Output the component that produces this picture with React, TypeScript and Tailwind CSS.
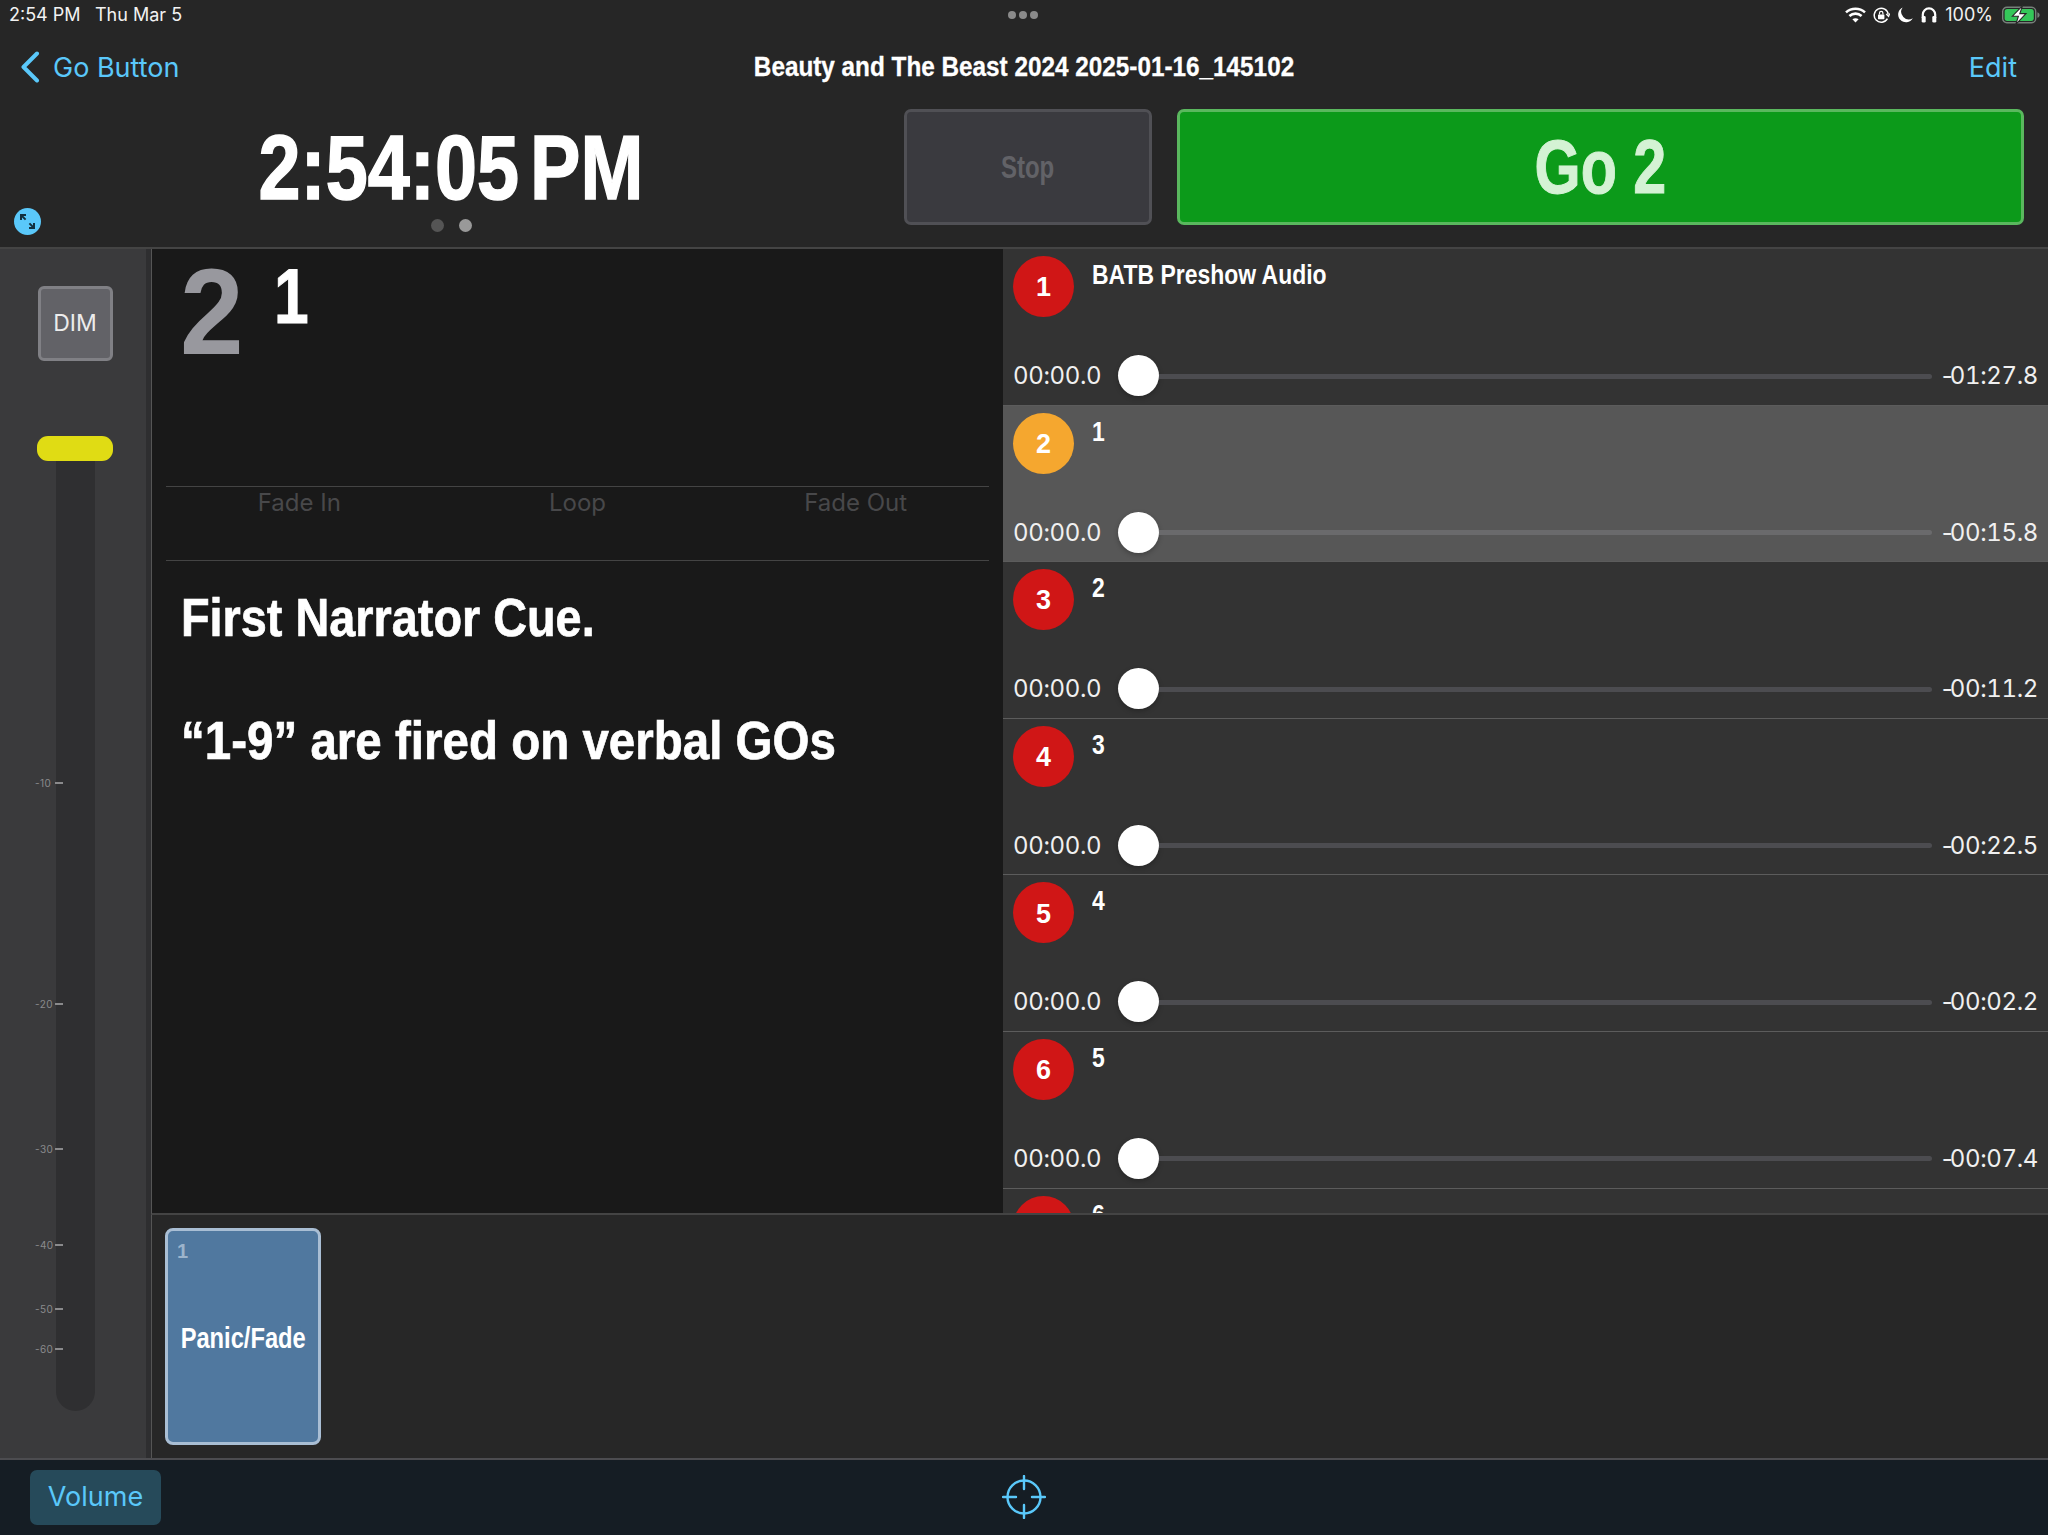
const sf = "font-['Inter','Liberation_Sans',sans-serif]";
const hv = "font-['Liberation_Sans',Arial,sans-serif] font-bold";

const cues = [
  { n: "1", name: "BATB Preshow Audio", left: "01:27.8" },
  { n: "2", name: "1", left: "00:15.8", active: true },
  { n: "3", name: "2", left: "00:11.2" },
  { n: "4", name: "3", left: "00:22.5" },
  { n: "5", name: "4", left: "00:02.2" },
  { n: "6", name: "5", left: "00:07.4" },
  { n: "7", name: "6", left: "00:00.0" },
];

const ticks = [
  { label: "-10", gap: "mt-[316px]" },
  { label: "-20", gap: "mt-[209px]" },
  { label: "-30", gap: "mt-[133px]" },
  { label: "-40", gap: "mt-[84px]" },
  { label: "-50", gap: "mt-[52px]" },
  { label: "-60", gap: "mt-[28px]" },
];

function StatusIcons() {
  return (
    <div className="flex items-center text-white">
      <svg width="21" height="16" viewBox="0 0 21 16" fill="none" stroke="currentColor" strokeWidth="2.6" className="mr-[7px]">
        <path d="M1 5.4C6.4.6 14.6.6 20 5.4" />
        <path d="M4.4 9C8 5.8 13 5.8 16.6 9" />
        <path d="M10.5 15.6 7.4 12.3c1.8-1.4 4.4-1.4 6.2 0z" fill="currentColor" stroke="none" />
      </svg>
      <svg width="17" height="17" viewBox="0 0 17 17" fill="none" stroke="currentColor" strokeWidth="1.5" className="mr-[7px]">
        <path d="M14.4 11.6A7 7 0 1 1 15.2 7.6" />
        <path d="M13.2 7l2.4 2.4 1.2-3" strokeWidth="1.2" />
        <rect x="5" y="7.4" width="6.4" height="4.8" rx=".6" fill="currentColor" stroke="none" />
        <path d="M6.5 7.4V6a1.7 1.7 0 0 1 3.4 0v1.4" strokeWidth="1.2" />
      </svg>
      <svg width="16" height="16" viewBox="0 0 16 16" fill="currentColor" className="mr-[8px]">
        <path d="M5.6.4A7.8 7.8 0 1 0 15.8 11.2 7.6 7.6 0 0 1 5.6.4z" />
      </svg>
      <svg width="16" height="16" viewBox="0 0 16 16" fill="none" stroke="currentColor" strokeWidth="2.2" className="mr-[8px]">
        <path d="M1.8 11V7.6a6.2 6.2 0 0 1 12.4 0V11" />
        <rect x=".7" y="9" width="4" height="6.6" rx="1.4" fill="currentColor" stroke="none" />
        <rect x="11.3" y="9" width="4" height="6.6" rx="1.4" fill="currentColor" stroke="none" />
      </svg>
      <span className={`${sf} text-[18px] leading-none text-[#f2f2f2] mr-[9px]`}>100%</span>
      <svg width="38" height="20" viewBox="0 0 38 20">
        <rect x=".7" y="2.2" width="33" height="15.6" rx="4.2" fill="none" stroke="#77807a" strokeWidth="1.4" />
        <rect x="2.6" y="4.1" width="29.2" height="11.8" rx="2.6" fill="#34c759" />
        <path d="M35.4 7.2v5.6c1.3-.4 2.2-1.5 2.2-2.8s-.9-2.4-2.2-2.8z" fill="#77807a" />
        <path d="M20.6.6 10.4 11.2h6l-2.6 8.2L24 8.6h-6.2z" fill="#fff" stroke="#262626" strokeWidth="1.1" />
      </svg>
    </div>
  );
}

function CueRow({ n, name, left, active }: { n: string; name: string; left: string; active?: boolean }) {
  return (
    <div className={`shrink-0 h-[156.6px] border-b border-[#5c5c5c] flex flex-col pl-[10px] pr-[10px] pt-[7px] ${active ? "bg-[#575757]" : "bg-[#333333]"}`}>
      <div className="flex items-start">
        <div className={`${hv} w-[61px] h-[61px] pt-[2px] rounded-full flex items-center justify-center text-white text-[27px] ${active ? "bg-[#f5a72f]" : "bg-[#d01616]"}`}>
          {n}
        </div>
        <span className={`${hv} ml-[18px] mt-[3px] text-white text-[27px] leading-[32px] origin-left scale-x-[.85]`}>{name}</span>
      </div>
      <div className="flex items-center mt-[38px]">
        <span className={`${sf} w-[105px] text-[24px] leading-[41px] tracking-[-.35px] tabular-nums text-[#f0f0f0]`}>00:00.0</span>
        <span className="w-[41px] h-[41px] rounded-full bg-white shadow-[0_2px_5px_rgba(0,0,0,.25)]" />
        <span className={`h-[5px] w-[773px] mt-[1px] rounded-r-full ${active ? "bg-[#6a6a6c]" : "bg-[#4c4c50]"}`} />
        <span className={`${sf} flex-1 text-right text-[24px] leading-[41px] tracking-[-.35px] tabular-nums text-[#f0f0f0]`}>
          <span className="tracking-[-5.4px]">-</span>{left}
        </span>
      </div>
    </div>
  );
}

export default function App() {
  return (
    <div className="w-[2048px] h-[1535px] flex flex-col overflow-hidden bg-[#262626]">
      {/* status bar + nav */}
      <div className="h-[30px] shrink-0 relative flex items-center justify-between pl-[9px] pr-[8px]">
        <div className={`${sf} flex text-[18px] leading-none text-[#f2f2f2]`}>
          <span className="w-[86px]">2:54 PM</span>
          <span>Thu Mar 5</span>
        </div>
        <div className="absolute left-[1008px] top-[11px] flex gap-[3px]">
          <span className="w-[8px] h-[8px] rounded-full bg-[#8a8a8a]" />
          <span className="w-[8px] h-[8px] rounded-full bg-[#8a8a8a]" />
          <span className="w-[8px] h-[8px] rounded-full bg-[#8a8a8a]" />
        </div>
        <StatusIcons />
      </div>
      <div className="h-[78px] shrink-0 relative flex items-center justify-between pl-[20px] pr-[31px] pb-[4px]">
        <div className="flex items-center text-[#5ac8fa]">
          <svg width="20" height="32" viewBox="0 0 20 32" fill="none" stroke="currentColor" strokeWidth="4" strokeLinecap="round" strokeLinejoin="round">
            <path d="M17 2.5 3.5 16 17 29.5" />
          </svg>
          <span className={`${sf} ml-[13px] text-[27px] leading-none`}>Go Button</span>
        </div>
        <div className={`${hv} absolute left-0 right-0 top-[21px] text-center text-white text-[27px] leading-[32px] scale-x-[.9] [-webkit-text-stroke:.3px_#fff]`}>
          Beauty and The Beast 2024 2025-01-16_145102
        </div>
        <span className={`${sf} text-[27px] leading-none text-[#5ac8fa]`}>Edit</span>
      </div>
      {/* clock + transport */}
      <div className="h-[141px] shrink-0 relative flex border-b-2 border-[#444444]">
        <div className="w-[904px] shrink-0 relative">
          <div className={`${hv} absolute left-0 top-[10px] w-[902px] text-center text-white text-[90px] leading-[100px] scale-x-[.84] [word-spacing:-12px] [-webkit-text-stroke:1.5px_#fff]`}>2:54:05 PM</div>
          <div className="absolute left-[14px] top-[100px] w-[27px] h-[27px] rounded-full bg-[#5ac8fa] flex items-center justify-center">
            <svg width="19" height="19" viewBox="0 0 19 19" fill="none" stroke="#12303e" strokeWidth="2">
              <path d="M3 8V3h5M3 3l4.6 4.6" />
              <path d="M16 11v5h-5M16 16l-4.6-4.6" />
            </svg>
          </div>
          <div className="absolute left-[431px] top-[111px] flex gap-[15px]">
            <span className="w-[13px] h-[13px] rounded-full bg-[#555555]" />
            <span className="w-[13px] h-[13px] rounded-full bg-[#999999]" />
          </div>
        </div>
        <div className={`${hv} w-[248px] h-[116px] mt-[1px] shrink-0 rounded-[7px] border-[3px] border-[#505055] bg-[#3a3a3f] flex items-center justify-center text-[#626267] text-[32px]`}>
          <span className="scale-x-[.75]">Stop</span>
        </div>
        <div className={`${hv} w-[847px] h-[116px] mt-[1px] ml-[25px] shrink-0 rounded-[7px] border-[3px] border-[#5ab85e] bg-[#0c9a1a] flex items-center justify-center text-[#d4f2d4] text-[76px]`}>
          <span className="scale-x-[.78] [-webkit-text-stroke:1px_#d4f2d4]">Go 2</span>
        </div>
      </div>
      {/* workspace */}
      <div className="flex-1 min-h-0 flex">
        <div className="w-[151px] shrink-0 flex flex-col items-center bg-[#3a3a3c] border-r-[5px] border-r-[#2e2e30] pl-[4px] pt-[37px] relative">
          <div className={`${sf} w-[75px] h-[75px] rounded-[6px] border-[3px] border-[#808085] bg-[#626267] flex items-center justify-center text-[23px] text-[#ececec]`}>DIM</div>
          <div className="w-[76px] h-[25px] mt-[75px] rounded-[11px] bg-[#e0dc14] relative z-10" />
          <div className="w-[39px] h-[950px] rounded-b-[20px] bg-[#2f2f31]" />
          <div className="absolute left-[35px] top-[212px] flex flex-col items-start">
            {ticks.map((t) => (
              <div key={t.label} className={`${t.gap} flex items-center h-[12px]`}>
                <span className={`${sf} w-[20px] text-[10px] leading-none tracking-[.4px] text-[#8a8a8c]`}>{t.label}</span>
                <span className="w-[8px] h-[2px] bg-[#8a8a8c]" />
              </div>
            ))}
          </div>
        </div>
        <div className="flex-1 min-w-0 flex flex-col">
          <div className="h-[966px] shrink-0 flex border-l border-[#555555] border-b-2 border-b-[#444444]">
            <div className="w-[851px] shrink-0 bg-[#191919] flex flex-col">
              <div className="h-[237px] shrink-0 flex items-start">
                <span className={`${hv} ml-[28px] mt-[3px] text-[123px] leading-[120px] text-[#98989e] origin-left scale-x-[.93]`}>2</span>
                <span className={`${hv} ml-[26px] mt-[2px] text-[78px] leading-[90px] text-white origin-left scale-x-[.8] [-webkit-text-stroke:1px_#fff]`}>1</span>
              </div>
              <div className="mx-[14px] h-[75px] shrink-0 border-y border-[#444444] flex items-start text-[24px] leading-[30px] text-[#48484a]">
                <span className={`${sf} w-[267px] text-center pt-[1px]`}>Fade In</span>
                <span className={`${sf} w-[290px] text-center pt-[1px]`}>Loop</span>
                <span className={`${sf} w-[267px] text-center pt-[1px]`}>Fade Out</span>
              </div>
              <div className={`${hv} pl-[29px] pt-[25px] text-white text-[54px] leading-[62px] [-webkit-text-stroke:.7px_#fff]`}>
                <div className="origin-left scale-x-[.867]">First Narrator Cue.</div>
                <div className="mt-[61px] origin-left scale-x-[.88] whitespace-nowrap">“1-9” are fired on verbal GOs</div>
              </div>
            </div>
            <div className="flex-1 min-w-0 flex flex-col overflow-hidden">
              {cues.map((c) => (
                <CueRow key={c.n} n={c.n} name={c.name} left={c.left} active={c.active} />
              ))}
            </div>
          </div>
          <div className="flex-1 min-h-0 bg-[#272727] border-l border-[#555555] pl-[13px] pt-[13px]">
            <div className={`${hv} relative w-[156px] h-[217px] rounded-[8px] border-[3px] border-[#a9bed4] bg-[#50789f] flex items-center justify-center text-white text-[30px]`}>
              <span className="absolute left-[9px] top-[5px] text-[20px] text-[#9cb4cc]">1</span>
              <span className="mt-[1px] scale-x-[.79]">Panic/Fade</span>
            </div>
          </div>
        </div>
      </div>
      {/* toolbar */}
      <div className="h-[77px] shrink-0 relative border-t-2 border-[#4c4c50] bg-[#151d24] pl-[30px] pt-[10px]">
        <div className={`${sf} w-[131px] h-[55px] rounded-[7px] bg-[#264a5a] flex items-center justify-center text-[27px] text-[#5ac8fa]`}>Volume</div>
        <svg width="44" height="44" viewBox="0 0 44 44" fill="none" stroke="#5ac8fa" strokeWidth="2.4" strokeLinecap="round" className="absolute left-[1002px] top-[15px]">
          <circle cx="22" cy="22" r="16.5" />
          <path d="M22 1v13M22 30v13M1 22h13M30 22h13" />
        </svg>
      </div>
    </div>
  );
}
